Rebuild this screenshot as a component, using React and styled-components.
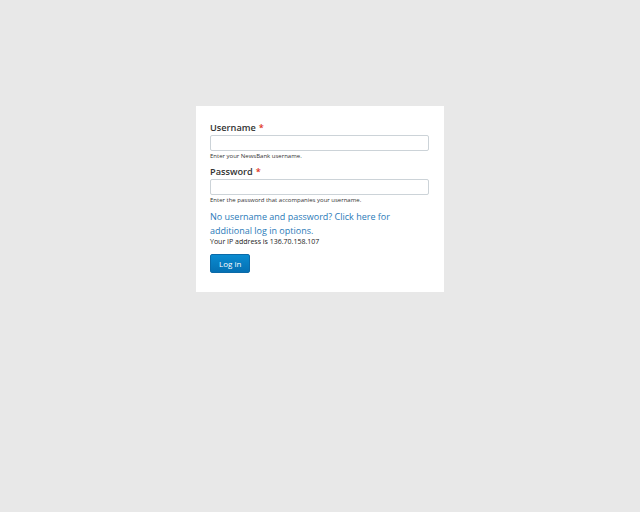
import React from "react";
import styled, { createGlobalStyle } from "styled-components";

const GlobalStyle = createGlobalStyle`
  html, body {
    margin: 0;
    padding: 0;
    background: #e8e8e8;
    font-family: "Open Sans", "Noto Sans", sans-serif;
  }
`;

const Page = styled.div`
  display: flex;
  justify-content: center;
  align-items: flex-start;
  padding-top: 106px;
  min-height: 512px;
  box-sizing: border-box;
`;

const Card = styled.form`
  width: 248px;
  box-sizing: border-box;
  background: #fff;
  padding: 14px 15px 19px 14px;
`;

const Label = styled.label`
  display: block;
  padding-top: 1px;
  font-size: 9.2px;
  font-weight: 600;
  line-height: 13px;
  color: #333;
  margin-top: ${(p) => (p.$first ? "0" : "4px")};
`;

const Required = styled.span`
  color: #e0321a;
  margin-left: 3px;
`;

const Input = styled.input`
  display: block;
  width: 100%;
  height: 16px;
  box-sizing: border-box;
  margin: 1px 0 0;
  border: 1px solid #ccd3d8;
  border-radius: 2px;
  background: #fff;
  font: inherit;
  outline: none;
`;

const Help = styled.div`
  padding-top: 1px;
  font-size: 6px;
  line-height: 8px;
  color: #333;
`;

const Link = styled.a`
  display: block;
  margin-top: 4px;
  padding-top: 2px;
  font-size: 9px;
  line-height: 14px;
  color: #2a7ab8;
  text-decoration: none;
`;

const Ip = styled.div`
  font-size: 7px;
  line-height: 8px;
  color: #222;
`;

const Button = styled.button`
  display: block;
  margin-top: 8px;
  height: 19px;
  padding: 0 8px;
  border: 1px solid #0b6aa8;
  border-radius: 2px;
  background: linear-gradient(#0a8bd0, #0570b3);
  color: #fff;
  font-family: "Open Sans", sans-serif;
  font-size: 8px;
  line-height: 17px;
  cursor: pointer;
`;

export default function App() {
  return (
    <>
      <GlobalStyle />
      <Page>
        <Card onSubmit={(e) => e.preventDefault()}>
          <Label $first>
            Username<Required>*</Required>
          </Label>
          <Input type="text" />
          <Help>Enter your NewsBank username.</Help>
          <Label>
            Password<Required>*</Required>
          </Label>
          <Input type="password" />
          <Help>Enter the password that accompanies your username.</Help>
          <Link href="#">
            No username and password? Click here for additional log in options.
          </Link>
          <Ip>Your IP address is 136.70.158.107</Ip>
          <Button type="submit">Log in</Button>
        </Card>
      </Page>
    </>
  );
}
